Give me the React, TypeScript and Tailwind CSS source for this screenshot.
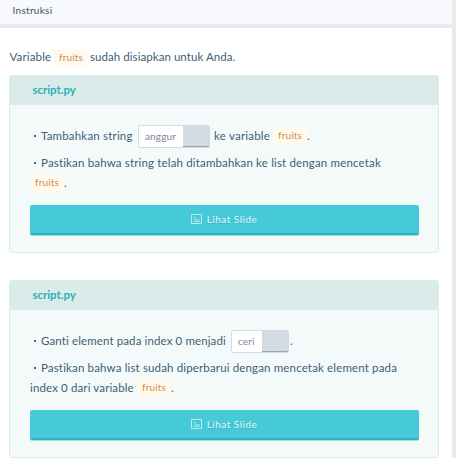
import type { ReactNode } from 'react';

function Code() {
  return (
    <code className="flex h-[18px] w-[34px] shrink-0 items-center justify-center rounded bg-[#fff9ee] pb-px font-['Lato',sans-serif] text-[10px] font-normal tracking-[0.15px] text-[#d08f50]">
      fruits
    </code>
  );
}

function CopyChip({ text, width }: { text: string; width: string }) {
  return (
    <span className={`flex h-[23px] shrink-0 overflow-hidden rounded-[2px] border border-[#d3dae2] bg-white text-[10px] tracking-[0.15px] text-[#7d879c] ${width}`}>
      <span className="flex flex-1 items-center pl-[6px]">{text}</span>
      <span className="-mb-px -mr-px w-[27px] border-b-2 border-[#98a4b5] bg-[#d3dae2]" />
    </span>
  );
}

function Bullet({ children }: { children: ReactNode }) {
  return (
    <>
      <span className="ml-1 mr-[5px] h-[2px] w-[2px] shrink-0 bg-[#45687d]" />
      {children}
    </>
  );
}

function SlideButton() {
  return (
    <button className="flex h-[30px] w-[389px] items-center justify-center gap-[5px] rounded-[2px] border-b-2 border-[#2eb2c0] bg-[#46cad7] pr-px text-[10px] tracking-[0.5px] text-[#e4fafa] shadow-[0_1px_0_#a3dce0]">
      <svg width="11" height="10" viewBox="0 0 11 10" fill="none" stroke="#b5edf0" strokeWidth="1">
        <path d="M.5.5h10v9H.5z" />
        <path d="M2.5 7.5h6M3 6.5l1.5-2 1.5 2 1.5-1.5 1 1.5M3 3.4h1.5" strokeWidth="0.9" />
      </svg>
      <span className="[text-shadow:0_1px_1px_#309faa88]">Lihat Slide</span>
    </button>
  );
}

function Card({ children }: { children: ReactNode }) {
  return (
    <section className="h-[178px] w-[430px] overflow-hidden rounded-[3px] border border-[#d9ecea] bg-[#f4fafa]">
      <h2 className="flex h-[29px] items-center bg-[#d9ecea] pb-[2px] pl-[22.5px] text-[11.5px] font-bold tracking-[-0.05px] text-[#30afb5]">
        script.py
      </h2>
      <div className="flex flex-col pl-5 pt-[18px]">
        {children}
        <div className="mt-3">
          <SlideButton />
        </div>
      </div>
    </section>
  );
}

export default function App() {
  return (
    <div className="h-[458px] w-[456px] overflow-hidden border-r-4 border-[#e9ebf0] bg-white font-['Lato',sans-serif] text-[11.5px] tracking-[0.16px] text-[#3c6076]">
      <header className="flex h-7 items-center border-b-4 border-[#e9ebef] bg-[#f8f9fd] pb-[3px] pl-[12.5px] text-[10px] tracking-[0.3px] text-[#465167]">
        Instruksi
      </header>
      <main className="pl-[9px] pt-5">
        <p className="flex h-[27px] items-start">
          <span className="w-[45px] whitespace-nowrap pl-[0.5px] leading-[18px]">Variable</span>
          <span className="pt-px"><Code /></span>
          <span className="ml-[2px] leading-[18px] tracking-[0.06px]">sudah disiapkan untuk Anda.</span>
        </p>
        <Card>
          <div className="flex h-[26px] items-center whitespace-nowrap">
            <span className="flex w-[108px] items-center tracking-[0.19px]">
              <Bullet>Tambahkan string</Bullet>
            </span>
            <CopyChip text="anggur" width="w-[72px]" />
            <span className="ml-1 w-[59px] tracking-[0.22px]">ke variable</span>
            <Code />.
          </div>
          <div className="mt-1 flex h-5 items-center whitespace-nowrap">
            <Bullet>Pastikan bahwa string telah ditambahkan ke list dengan mencetak</Bullet>
          </div>
          <div className="flex h-5 items-center"><Code />.</div>
        </Card>
        <div className="mt-[27px]">
          <Card>
            <div className="flex h-[26px] items-center whitespace-nowrap">
              <span className="flex w-[201px] items-center tracking-[0.12px]">
                <Bullet>Ganti element pada index 0 menjadi</Bullet>
              </span>
              <span className="mr-px"><CopyChip text="ceri" width="w-[58px]" /></span>.
            </div>
            <div className="mt-1 flex h-5 items-center whitespace-nowrap tracking-[0.15px]">
              <Bullet>Pastikan bahwa list sudah diperbarui dengan mencetak element pada</Bullet>
            </div>
            <div className="flex h-5 items-center whitespace-nowrap">
              <span className="w-[107px] tracking-[0.13px]">index 0 dari variable</span>
              <Code />.
            </div>
          </Card>
        </div>
      </main>
    </div>
  );
}
